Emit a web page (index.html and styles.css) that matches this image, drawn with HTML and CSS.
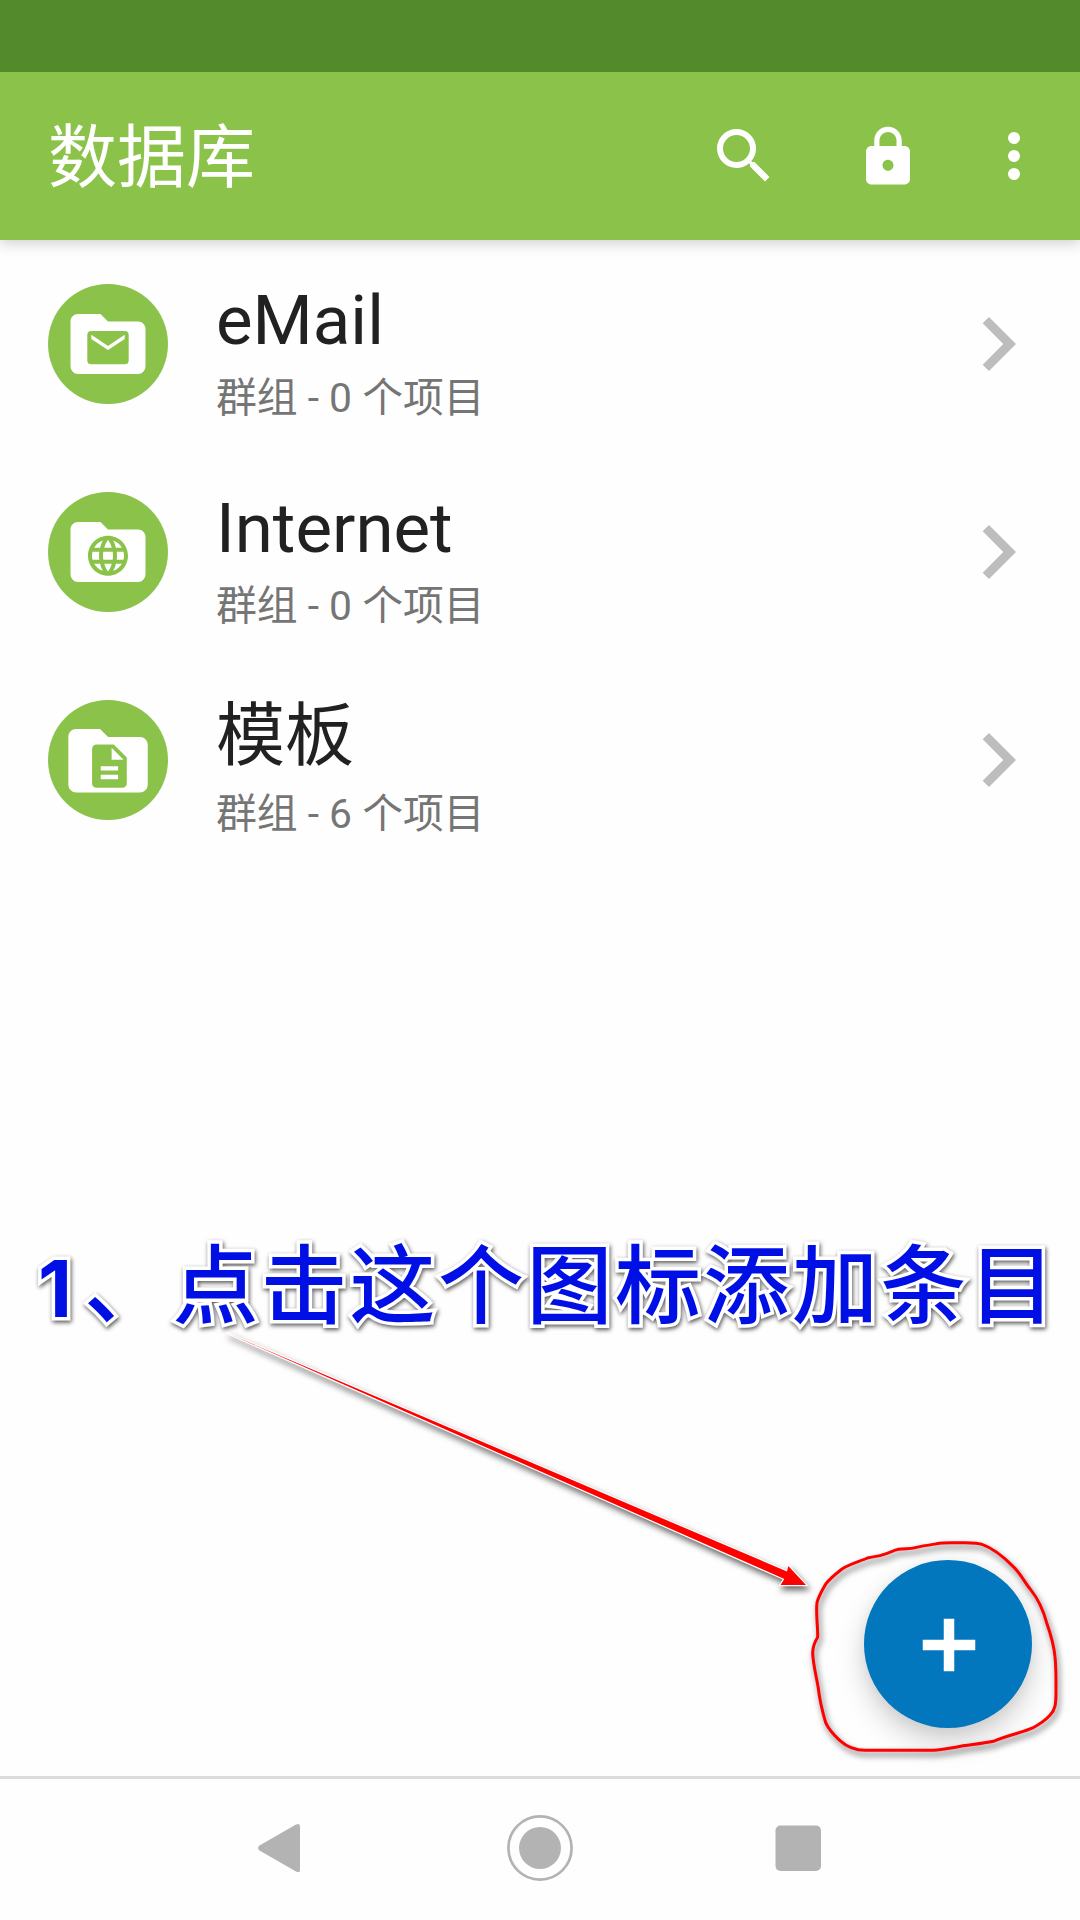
FILE: index.html
```html
<!DOCTYPE html>
<html lang="zh-CN">
<head>
<meta charset="utf-8">
<title>数据库</title>
<link rel="stylesheet" href="styles.css">
</head>
<body>
<div class="screen">
  <div class="status-bar"></div>
  <header class="app-bar">
    <h1 class="app-title">数据库</h1>
    <svg class="icon-search" viewBox="0 0 24 24"><path d="M15.5 14h-.79l-.28-.27A6.471 6.471 0 0 0 16 9.5 6.5 6.5 0 1 0 9.5 16c1.61 0 3.09-.59 4.23-1.57l.27.28v.79l5 4.99L20.49 19l-4.99-5zm-6 0C7.01 14 5 11.99 5 9.5S7.01 5 9.5 5 14 7.01 14 9.5 11.99 14 9.5 14z"/></svg>
    <svg class="icon-lock" viewBox="0 0 24 24"><path d="M18 8h-1V6c0-2.76-2.24-5-5-5S7 3.24 7 6v2H6c-1.1 0-2 .9-2 2v10c0 1.1.9 2 2 2h12c1.1 0 2-.9 2-2V10c0-1.1-.9-2-2-2zm-6 9c-1.1 0-2-.9-2-2s.9-2 2-2 2 .9 2 2-.9 2-2 2zm3.1-9H8.9V6c0-1.71 1.39-3.1 3.1-3.1s3.1 1.39 3.1 3.1v2z"/></svg>
    <svg class="icon-more" viewBox="0 0 24 24"><circle cx="12" cy="6" r="2"/><circle cx="12" cy="12" r="2"/><circle cx="12" cy="18" r="2"/></svg>
  </header>

  <main class="group-list">
    <div class="row">
      <svg class="group-icon" viewBox="0 0 120 120">
        <circle class="disc" cx="60" cy="60" r="60"/>
        <path class="folder" transform="translate(15 15) scale(3.75)" d="M10 4H4c-1.11 0-2 .89-2 2v12a2 2 0 0 0 2 2h16a2 2 0 0 0 2-2V8c0-1.11-.9-2-2-2h-8l-2-2z"/>
        <rect class="glyph" x="39.3" y="47" width="41.4" height="33.3" rx="4"/>
        <path class="folder" d="M43.3 50.8 60 62 76.7 50.8V55L60 66 43.3 55z"/>
      </svg>
      <div class="row-text"><div class="row-title">eMail</div><div class="row-sub">群组 - 0 个项目</div></div>
      <svg class="chevron" viewBox="0 0 24 24"><path d="M8.59 16.59 13.17 12 8.59 7.41 10 6l6 6-6 6z"/></svg>
    </div>
    <div class="row">
      <svg class="group-icon" viewBox="0 0 120 120">
        <circle class="disc" cx="60" cy="60" r="60"/>
        <path class="folder" transform="translate(15 15) scale(3.75)" d="M10 4H4c-1.11 0-2 .89-2 2v12a2 2 0 0 0 2 2h16a2 2 0 0 0 2-2V8c0-1.11-.9-2-2-2h-8l-2-2z"/>
        <path class="glyph" transform="translate(36 39.7) scale(2)" d="M11.99 2C6.47 2 2 6.48 2 12s4.47 10 9.99 10C17.52 22 22 17.52 22 12S17.52 2 11.99 2zm6.93 6h-2.95a15.65 15.65 0 0 0-1.38-3.56A8.03 8.03 0 0 1 18.92 8zM12 4.04c.83 1.2 1.48 2.53 1.91 3.96h-3.82c.43-1.43 1.08-2.76 1.91-3.96zM4.26 14C4.1 13.36 4 12.69 4 12s.1-1.36.26-2h3.38c-.08.66-.14 1.32-.14 2s.06 1.34.14 2H4.26zm.82 2h2.95c.32 1.25.78 2.45 1.38 3.56A7.987 7.987 0 0 1 5.08 16zm2.95-8H5.08a7.987 7.987 0 0 1 4.33-3.56A15.65 15.65 0 0 0 8.03 8zM12 19.96c-.83-1.2-1.48-2.53-1.91-3.96h3.82c-.43 1.43-1.08 2.76-1.91 3.96zM14.34 14H9.66c-.09-.66-.16-1.32-.16-2s.07-1.35.16-2h4.68c.09.65.16 1.32.16 2s-.07 1.34-.16 2zm.25 5.56c.6-1.11 1.06-2.31 1.38-3.56h2.95a8.03 8.03 0 0 1-4.33 3.56zM16.36 14c.08-.66.14-1.32.14-2s-.06-1.34-.14-2h3.38c.16.64.26 1.31.26 2s-.1 1.36-.26 2h-3.38z"/>
      </svg>
      <div class="row-text"><div class="row-title">Internet</div><div class="row-sub">群组 - 0 个项目</div></div>
      <svg class="chevron" viewBox="0 0 24 24"><path d="M8.59 16.59 13.17 12 8.59 7.41 10 6l6 6-6 6z"/></svg>
    </div>
    <div class="row">
      <svg class="group-icon" viewBox="0 0 120 120">
        <circle class="disc" cx="60" cy="60" r="60"/>
        <path class="folder" transform="translate(12.4 13.2) scale(3.97)" d="M10 4H4c-1.11 0-2 .89-2 2v12a2 2 0 0 0 2 2h16a2 2 0 0 0 2-2V8c0-1.11-.9-2-2-2h-8l-2-2z"/>
        <path class="glyph" transform="translate(35.4 40.1) scale(2.17)" d="M14 2H6c-1.1 0-1.99.9-1.99 2L4 20c0 1.1.89 2 1.99 2H18c1.1 0 2-.9 2-2V8l-6-6zm2 16H8v-2h8v2zm0-4H8v-2h8v2zm-3-5V3.5L18.5 9H13z"/>
      </svg>
      <div class="row-text"><div class="row-title">模板</div><div class="row-sub">群组 - 6 个项目</div></div>
      <svg class="chevron" viewBox="0 0 24 24"><path d="M8.59 16.59 13.17 12 8.59 7.41 10 6l6 6-6 6z"/></svg>
    </div>
  </main>

  <nav class="nav-bar">
    <svg class="nav-icons" viewBox="0 0 1080 141">
      <path d="M259.5 66.5 296 45.6q4-2 4 2v42.800q0 4-4 2L259.500 71.500q-2.800-2.500 0-5z"/>
      <circle class="home-ring" cx="540" cy="69" r="31.600"/>
      <circle cx="540" cy="69" r="21"/>
      <rect x="775.5" y="46.5" width="45.5" height="45.5" rx="5"/>
    </svg>
  </nav>

  <button class="fab" aria-label="添加"><svg viewBox="0 0 24 24"><path d="M19 13.400h-5.600V19h-2.800v-5.600H5v-2.800h5.600V5h2.800v5.600H19z"/></svg></button>

  <p class="note"><span class="note-number">1</span>、点击这个图标添加条目</p>
  <svg class="markup" viewBox="0 0 1080 1920">
    <path class="arrow" d="M227 1333 787 1571.500 788.300 1566 806 1585H780.500L784.300 1579z"/>
    <path class="loop" transform="translate(780 1520) scale(.3333)" d="M113 352C114 320 107 280 111 248C115 230 128 208 136 194C150 174 172 158 186 147C208 132 240 124 262 114C280 109 295 110 312 103C330 98 340 91 356 88C374 85 390 88 406 83C425 77 450 76 470 71C490 67 510 68 530 68C560 69 590 66 608 74C640 85 670 110 700 140C722 161 733 186 752 209C775 238 792 278 800 308C813 345 822 375 825 410C829 445 828 490 828 520C828 550 826 570 810 586C795 602 775 615 758 624C730 637 695 642 640 664C600 673 560 674 530 681C500 686 480 691 450 691H255C225 691 200 680 180 662C163 646 148 633 137 608C126 570 119 540 115 505C108 465 99 430 98 400C98 380 105 365 113 352Z"/>
  </svg>
</div>
</body>
</html>
```
FILE: styles.css
```css
* { box-sizing: border-box; }

body {
  margin: 0;
  font-family: Roboto, "Noto Sans CJK SC", sans-serif;
}

.screen {
  position: relative;
  display: flex;
  flex-direction: column;
  width: 1080px;
  height: 1920px;
  overflow: hidden;
  background: #fefefe;
}

.status-bar {
  z-index: 1;
  height: 72px;
  background: #538a2c;
}

.app-bar {
  display: flex;
  align-items: center;
  height: 168px;
  padding: 0 30px 0 48px;
  background: #8bc34a;
  box-shadow: 0 3px 14px rgba(0, 0, 0, .2);
  fill: #fff;
}

.app-title {
  flex: 1;
  margin: 0;
  padding-top: 5px;
  color: #fff;
  font-size: 69px;
  font-weight: 400;
  line-height: 100px;
}

.icon-search, .icon-more { width: 72px; height: 72px; }
.icon-search { margin-right: 75px; }
.icon-lock { width: 66px; height: 66px; margin: 2px 57px 0 0; }

.group-list { flex: 1; }

.row {
  display: flex;
  align-items: center;
  height: 208px;
  padding: 0 28px 0 48px;
}

.group-icon { width: 120px; height: 120px; }
.disc, .glyph { fill: #8bc34a; }
.folder { fill: #fff; }

.row-text {
  flex: 1;
  padding: 18px 0 0 48px;
}

.row-title {
  height: 89px;
  color: #212121;
  font-size: 69px;
  line-height: 88px;
}

.row-sub {
  height: 64px;
  color: #757575;
  font-size: 40.8px;
  line-height: 64px;
}

.chevron { width: 108px; height: 108px; fill: #bdbdbd; }

.nav-bar {
  height: 144px;
  border-top: 3px solid #dcdcdc;
}

.nav-icons { display: block; width: 1080px; height: 141px; fill: #b3b3b3; }
.home-ring { fill: none; stroke: #b3b3b3; stroke-width: 2.7; }

.fab {
  position: absolute;
  right: 48px;
  bottom: 192px;
  display: grid;
  place-items: center;
  width: 168px;
  height: 168px;
  padding: 1px 0 0 1px;
  border: 0;
  border-radius: 50%;
  background: #0277bd;
  box-shadow: 0 14px 28px rgba(0, 0, 0, .18), 0 2px 14px rgba(0, 0, 0, .06);
}

.fab svg { width: 90px; height: 90px; fill: #fff; }

.note {
  position: absolute;
  left: 38px;
  top: 1215px;
  margin: 0;
  color: #000fe4;
  font-family: "Noto Sans CJK SC", sans-serif;
  font-size: 86px;
  font-weight: 500;
  line-height: 130px;
  letter-spacing: 2.5px;
  white-space: nowrap;
  -webkit-text-stroke: 7px #fff;
  paint-order: stroke fill;
  filter: drop-shadow(1px 2px 2px rgba(0, 0, 0, .65));
}

.note-number {
  display: inline-block;
  width: 46px;
  font-family: Inter, sans-serif;
  font-size: 79px;
  font-weight: 700;
  letter-spacing: 0;
}

.markup {
  position: absolute;
  left: 0;
  top: 0;
  width: 1080px;
  height: 1920px;
  pointer-events: none;
  filter: drop-shadow(2px 4px 3px rgba(0, 0, 0, .6));
}

.arrow { fill: #f00; stroke: #fff; stroke-width: 2.4; paint-order: stroke fill; }
.loop { fill: none; stroke: #f00; stroke-width: 9; stroke-linejoin: round; }
```
